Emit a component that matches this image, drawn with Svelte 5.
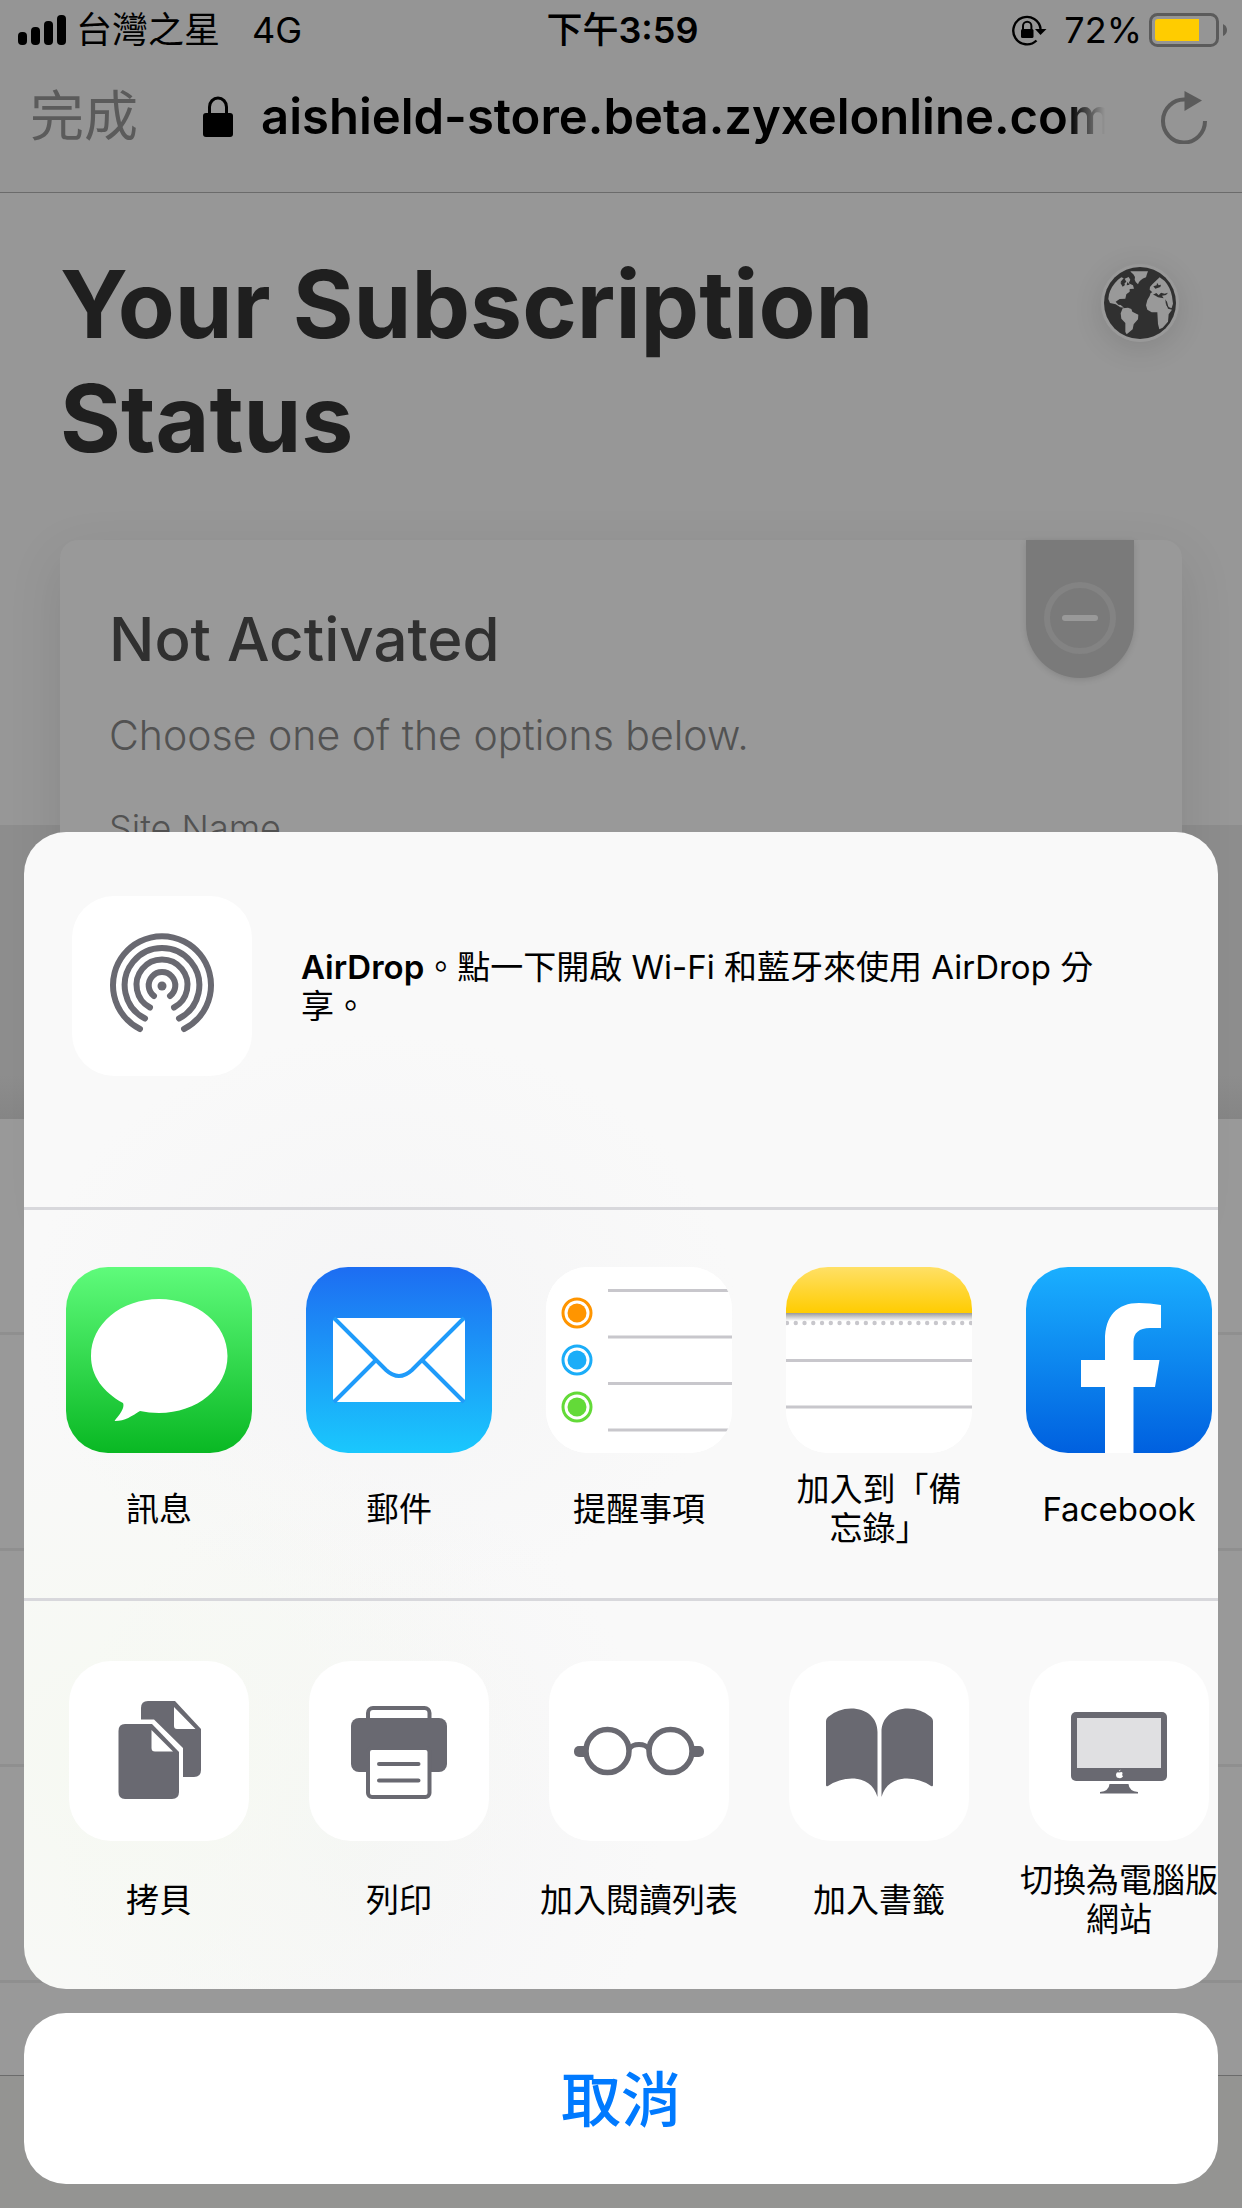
<script>
  const bars = [13, 18, 24, 30];
  const apps = [
    { id: 'messages', label: '訊息' },
    { id: 'mail', label: '郵件' },
    { id: 'reminders', label: '提醒事項' },
    { id: 'notes', label: '加入到「備忘錄」' },
    { id: 'facebook', label: 'Facebook' }
  ];
  const actions = [
    { id: 'copy', label: '拷貝' },
    { id: 'print', label: '列印' },
    { id: 'reading', label: '加入閱讀列表' },
    { id: 'bookmark', label: '加入書籤' },
    { id: 'desktop', label: '切換為電腦版網站' }
  ];
  const reminderRows = [
    { y: 46, color: '#ff9500' },
    { y: 93, color: '#1badf8' },
    { y: 140, color: '#63da38' }
  ];
</script>

<div class="screen">
  <header class="chrome">
    <div class="status">
      <div class="carrier">
        <div class="signal">
          {#each bars as h}<i style:height="{h}px"></i>{/each}
        </div>
        <span>台灣之星</span>
        <span class="network">4G</span>
      </div>
      <div class="clock">下午<b>3:59</b></div>
      <div class="power">
        <svg width="36" height="32" viewBox="0 0 36 32" aria-hidden="true">
          <path d="M24.500 26.500 A13.700 13.700 0 1 1 28.600 15" fill="none" stroke="#000" stroke-width="2.4" />
          <path d="M23 15 H34.500 L28.500 21 Z" fill="#000" />
          <rect x="9" y="15" width="12.500" height="9" rx="1.500" />
          <path d="M11 16 V12 a4.200 4.200 0 0 1 8.400 0 V16" fill="none" stroke="#000" stroke-width="2" />
        </svg>
        <span>72%</span>
        <svg class="battery" width="78" height="34" viewBox="0 0 78 34" aria-hidden="true">
          <rect x="1.500" y="1.500" width="67" height="31" rx="7" fill="none" stroke="#5b5b5b" stroke-width="3" />
          <path d="M50 6 H9 a3 3 0 0 0 -3 3 V25 a3 3 0 0 0 3 3 H50 Z" fill="#ffcc00" />
          <path d="M74 11 q4 2 4 6 t-4 6 Z" fill="#5b5b5b" />
        </svg>
      </div>
    </div>
    <div class="toolbar">
      <button class="done">完成</button>
      <div class="address">
        <svg width="30" height="42" viewBox="0 0 30 42" aria-hidden="true">
          <rect x="0" y="17" width="30" height="24" rx="3" />
          <path d="M6.500 18 V11 a8.500 9 0 0 1 17 0 V18" fill="none" stroke="#000" stroke-width="3" />
        </svg>
        <span>aishield-store.beta.zyxelonline.com</span>
      </div>
      <button class="reload" aria-label="重新載入">
        <svg width="48" height="54" viewBox="0 0 48 54" aria-hidden="true">
          <path d="M24 9.500 A21 21.500 0 1 0 44 31" fill="none" stroke="#5b5b5b" stroke-width="4" />
          <path d="M23.500 1 L41 10.500 L23.500 21 Z" fill="#5b5b5b" />
        </svg>
      </button>
    </div>
  </header>

  <main>
    <div class="title">
      <h1>Your Subscription Status</h1>
      <button class="language" aria-label="Language">
        <svg width="78" height="78" viewBox="33 29 234 234" aria-hidden="true">
          <circle cx="150" cy="146" r="117" fill="#999" />
          <circle cx="150" cy="146" r="108" fill="#303030" />
          <g fill="#999">
            <path d="M121 51 L174 51 Q170 61 168 69 Q158 72 152 78 Q146 83 144 90 Q136 84 134 76 Q137 67 130 60 Q124 56 121 51Z" />
            <path d="M57 120 Q63 96 84 76 L94 69 L101 72 L92 82 L101 90 L109 82 L104 73 L116 68 L121 76 L116 87 L129 93 L132 103 L119 104 L119 112 L109 120 L106 133 L89 134 L77 142 L85 151 L92 152 L102 160 L91 159 L77 150 L60 146 L55 134Z" />
            <path d="M98 162 L114 160 L124 164 L127 172 L145 181 L144 195 L131 210 L128 225 L110 240 L106 233 L106 206 L94 193 L92 177Z" />
            <path d="M179 125 L182 116 L187 114 L179 106 L180 98 L187 90 L209 69 L224 80 Q241 99 246 126 L249 148 L244 164 L235 157 L231 142 L225 135 L234 163 L246 166 L236 180 L234 202 L218 220 L208 225 L204 209 L202 174 L185 174 L172 166 L168 153 L172 137Z" />
          </g>
          <path d="M190 96 L200 93 L201 85 L206 93 L213 91 L211 98 L196 103Z M189 121 L199 116 L206 123 L213 115 L224 118 L234 115 L228 122 L216 124 L221 132 L204 129 L194 123Z M112 83 l7 8 -9 2Z M91 85 l9 -4 5 11 -7 5Z" fill="#303030" />
          <path d="M228 142 Q229 162 246 163" fill="none" stroke="#303030" stroke-width="3" />
        </svg>
      </button>
    </div>
    <section class="card">
      <div class="ribbon">
        <svg width="84" height="72" viewBox="0 0 84 72" aria-hidden="true">
          <circle cx="42" cy="36" r="33" fill="none" stroke="#838383" stroke-width="6" />
          <path d="M27 36 H57" stroke="#999" stroke-width="6" stroke-linecap="round" />
        </svg>
      </div>
      <h2>Not Activated</h2>
      <p>Choose one of the options below.</p>
      <p class="field">Site Name</p>
    </section>
  </main>
  <div class="band"></div>
  <div class="list"><i></i><i></i><i></i><i></i></div>
  <footer></footer>

  <div class="overlay">
    <div class="sheet">
      <section class="airdrop">
        <button class="tile" aria-label="AirDrop">
          <svg width="180" height="180" viewBox="0 0 180 180" aria-hidden="true">
            <g fill="none" stroke="#696971" stroke-width="6" stroke-linecap="round">
              <path d="M68 133 A49 49 0 1 1 112 133" />
              <path d="M73 122.500 A37.300 37.300 0 1 1 107 122.500" />
              <path d="M78 111.500 A25.500 25.500 0 1 1 102 111.500" />
              <path d="M82 100 A13.300 13.300 0 1 1 98 100" />
            </g>
            <circle cx="90" cy="90" r="4.500" fill="#696971" />
          </svg>
        </button>
        <p><b>AirDrop</b>。點一下開啟 Wi-Fi 和藍牙來使用 AirDrop 分享。</p>
      </section>

      <section class="row">
        {#each apps as app}
          <button class="item">
            <span class="app">
              <svg width="186" height="186" viewBox="0 0 186 186" aria-hidden="true">
                {#if app.id === 'messages'}
                  <defs><linearGradient id="gm" x2="0" y2="1"><stop stop-color="#5ffb7b" /><stop offset="1" stop-color="#09b823" /></linearGradient></defs>
                  <rect width="186" height="186" fill="url(#gm)" />
                  <path d="M93 32 C131 32 161.500 57 161.500 89 C161.500 121 131 146 93 146 C86 146 80 145 74 144 C66 149 59 154 49 154 C47 154 60 143 57 136 C37 125 25 109 25 89 C25 57 55 32 93 32Z" fill="#fff" />
                {:else if app.id === 'mail'}
                  <defs><linearGradient id="ga" x2="0" y2="1"><stop stop-color="#1d6df2" /><stop offset="1" stop-color="#1ac8fd" /></linearGradient></defs>
                  <rect width="186" height="186" fill="url(#ga)" />
                  <rect x="27" y="51" width="132" height="84" rx="4" fill="#fff" />
                  <path d="M28 51 L80 103 Q93 115 106 103 L158 51 M28 135 L70 93 M158 135 L116 93" fill="none" stroke="#1f9bfa" stroke-width="4" />
                {:else if app.id === 'reminders'}
                  <rect width="186" height="186" fill="#fff" />
                  <path d="M62 23.500 H186 M62 70 H186 M62 116.500 H186 M62 163 H186" stroke="#c8c7cc" stroke-width="3" />
                  {#each reminderRows as r}
                    <circle cx="31" cy={r.y} r="14" fill="none" stroke={r.color} stroke-width="3" />
                    <circle cx="31" cy={r.y} r="9.500" fill={r.color} />
                  {/each}
                {:else if app.id === 'notes'}
                  <defs>
                    <linearGradient id="gn" x2="0" y2="1"><stop stop-color="#ffe066" /><stop offset="1" stop-color="#ffcc00" /></linearGradient>
                    <linearGradient id="gs" x2="0" y2="1"><stop stop-color="#9a9a9a" /><stop offset="1" stop-color="#fff" /></linearGradient>
                  </defs>
                  <rect width="186" height="186" fill="#fff" />
                  <rect width="186" height="46" fill="url(#gn)" />
                  <rect y="46" width="186" height="8" fill="url(#gs)" />
                  <path d="M1 56 H186" stroke="#c8c7cc" stroke-width="4.400" stroke-linecap="round" stroke-dasharray="0 8.760" />
                  <path d="M0 93.500 H186 M0 140 H186" stroke="#c8c7cc" stroke-width="3" />
                {:else}
                  <defs><linearGradient id="gf" x2="0" y2="1"><stop stop-color="#1aafff" /><stop offset="1" stop-color="#0060df" /></linearGradient></defs>
                  <rect width="186" height="186" fill="url(#gf)" />
                  <path d="M79 186 V120 H55 V93 H79 V73 C79 49 91 36 113 36 Q124 36 135 38 V61 H124 C113 61 107.500 66 107.500 75 V93 H133.500 L129 120 H107.500 V186Z" fill="#fff" />
                {/if}
              </svg>
            </span>
            <span class="label short">{app.label}</span>
          </button>
        {/each}
      </section>

      <section class="row actions">
        {#each actions as action}
          <button class="item">
            <span class="tile">
              <svg width="180" height="180" viewBox="0 0 180 180" fill="#696971" aria-hidden="true">
                {#if action.id === 'copy'}
                  <path d="M72 58.500 V47 Q72 40 79 40 H106 L132 68 V109 Q132 116 125 116 H114 V87 L85 58.500Z" />
                  <path d="M56 63 H83 L110 91 V131 Q110 138 103 138 H56 Q49.500 138 49.500 131 V70 Q49.500 63 56 63Z" />
                  <path d="M105 46 L126.500 68 H108 Q105 68 105 65Z M82.500 69 L104 90.500 H86 Q82.500 90.500 82.500 87Z" fill="#fff" />
                {:else if action.id === 'print'}
                  <rect x="59" y="47" width="61.500" height="40" rx="5" fill="#fff" stroke="#696971" stroke-width="4" />
                  <rect x="42" y="57" width="96" height="54" rx="8" />
                  <rect x="59" y="87" width="61.500" height="49" rx="4" fill="#fff" stroke="#696971" stroke-width="4" />
                  <path d="M70 103 H109.500 M70 119.500 H109.500" stroke="#696971" stroke-width="4" stroke-linecap="round" />
                {:else if action.id === 'reading'}
                  <g fill="none" stroke="#696971">
                    <circle cx="58.500" cy="90" r="21.500" stroke-width="5.500" />
                    <circle cx="121.500" cy="90" r="21.500" stroke-width="5.500" />
                    <path d="M80 88 Q83 83.500 90 83.500 Q97 83.500 100 88" stroke-width="5" />
                  </g>
                  <rect x="25" y="85" width="11" height="11" rx="5" />
                  <rect x="30" y="85" width="6" height="11" />
                  <rect x="144" y="85" width="11" height="11" rx="5" />
                  <rect x="144" y="85" width="6" height="11" />
                {:else if action.id === 'bookmark'}
                  <path d="M37 60 Q37 58 39 56 Q49 47.500 62 47.500 C78 47.500 88.500 57 88.500 71 V136 C85 124 76 117.500 63 117.500 Q50 117.500 39 125 Q37 126 37 124Z" />
                  <path d="M144 60 Q144 58 142 56 Q132 47.500 119 47.500 C103 47.500 92.500 57 92.500 71 V136 C96 124 105 117.500 118 117.500 Q131 117.500 142 125 Q144 126 144 124Z" />
                {:else}
                  <rect x="42" y="51" width="96" height="69" rx="5" />
                  <rect x="48" y="57" width="84" height="50" fill="#e0e0e2" />
                  <path d="M80.500 123 H99.500 Q100 130 109 131 V132.500 H71 V131 Q80 130 80.500 123Z" />
                  <path d="M90 111.500 q4 -1.500 3.500 1 q-1 1.500 .500 3 q-2 2.500 -4 1.500 q-3 0 -3 -3.500 q.500 -3 3 -2Z M90 110.500 q0 -1.500 1.500 -2 q0 1.500 -1.500 2Z" fill="#fff" />
                {/if}
              </svg>
            </span>
            <span class="label">{action.label}</span>
          </button>
        {/each}
      </section>
    </div>
    <button class="cancel">取消</button>
  </div>
</div>

<style>
  :global(body) {
    margin: 0;
  }
  .screen {
    position: relative;
    min-height: 100vh;
    overflow: hidden;
    display: flex;
    flex-direction: column;
    background: #979797;
    color: #000;
    font-family: Inter, 'Noto Sans CJK TC', sans-serif;
  }
  button {
    margin: 0;
    padding: 0;
    border: 0;
    background: none;
    color: inherit;
    font: inherit;
  }
  svg {
    display: block;
    flex: none;
  }
  h1,
  h2,
  p {
    margin: 0;
    font-weight: 400;
  }
  b {
    font-weight: 600;
  }

  .chrome {
    background: #959595;
    border-bottom: 1px solid #6b6b6b;
  }
  .status {
    display: grid;
    grid-template-columns: 1fr auto 1fr;
    align-items: center;
    height: 60px;
    padding: 0 15px 0 18px;
    font-size: 36px;
    line-height: 60px;
  }
  .carrier,
  .power {
    display: flex;
    align-items: center;
  }
  .power {
    justify-content: flex-end;
    gap: 16px;
  }
  .battery {
    margin-left: -9px;
  }
  .signal {
    display: flex;
    align-items: flex-end;
    gap: 4px;
    margin-right: 10px;
  }
  .signal i {
    width: 9px;
    border-radius: 4px;
    background: #000;
  }
  .network {
    margin-left: 32px;
  }
  .clock {
    font-weight: 500;
  }
  .toolbar {
    display: flex;
    align-items: center;
    height: 132px;
    padding: 0 33px 18px 30px;
    box-sizing: border-box;
  }
  .done {
    color: #5b5b5b;
    font-size: 54px;
    font-weight: 400;
    line-height: 80px;
  }
  .address {
    flex: 1;
    min-width: 0;
    display: flex;
    align-items: center;
    gap: 28px;
    margin: 0 56px 0 65px;
    overflow: hidden;
    white-space: nowrap;
    font-size: 49px;
    font-weight: 600;
    line-height: 80px;
    mask-image: linear-gradient(to left, transparent, #000 36px);
  }

  main {
    padding: 54px 60px 0;
    height: 578px;
  }
  .title {
    display: flex;
    justify-content: space-between;
    align-items: flex-start;
  }
  h1 {
    max-width: 900px;
    color: #1f1f1f;
    font-size: 93px;
    font-weight: 700;
    line-height: 114px;
  }
  .language {
    margin: 17px 3px 0 0;
    border-radius: 50%;
    box-shadow: 0 6px 30px rgba(0, 0, 0, 0.12);
  }
  .card {
    position: relative;
    height: 600px;
    margin-top: 65px;
    padding: 69px 49px 0;
    border-radius: 18px;
    background: #999;
    box-shadow: 0 18px 54px rgba(0, 0, 0, 0.1);
  }
  .ribbon {
    position: absolute;
    top: 0;
    right: 48px;
    display: flex;
    align-items: flex-end;
    justify-content: center;
    width: 108px;
    height: 138px;
    padding-bottom: 24px;
    box-sizing: border-box;
    border-radius: 0 0 54px 54px;
    background: #7a7a7a;
    box-shadow: 0 2px 6px rgba(0, 0, 0, 0.12);
  }
  h2 {
    color: #303030;
    font-size: 60px;
    font-weight: 500;
    line-height: 60px;
  }
  .card p {
    margin-top: 36px;
    color: #525252;
    font-size: 41px;
    font-weight: 300;
    line-height: 60px;
  }
  .card .field {
    margin-top: 33px;
    font-size: 36px;
  }
  .band {
    height: 294px;
    background: linear-gradient(#8d8d8d 85%, #858585);
  }
  .list {
    flex: 1;
    background: #999;
  }
  .list i {
    display: block;
    height: 213px;
    border-bottom: 3px solid #8f8f8f;
  }
  footer {
    height: 132px;
    border-top: 1px solid #6b6b6b;
    background: #949492;
  }

  .overlay {
    position: absolute;
    inset: auto 24px 24px;
    display: flex;
    flex-direction: column;
    gap: 24px;
  }
  .sheet {
    overflow: hidden;
    border-radius: 42px;
    background:
      radial-gradient(ellipse at 8% 80%, #f6f9f2, transparent 28%),
      radial-gradient(ellipse at 30% 42%, #f5f5f6, transparent 30%),
      radial-gradient(ellipse at 28% 86%, #f5f5f6, transparent 25%),
      #f9f9f9;
  }
  .airdrop {
    display: flex;
    align-items: flex-start;
    gap: 49px;
    height: 375px;
    padding: 64px 100px 0 48px;
    box-sizing: border-box;
    font-size: 33px;
    line-height: 39px;
  }
  .airdrop p {
    padding-top: 52px;
  }
  .tile,
  .app {
    display: block;
    flex: none;
    overflow: hidden;
    border-radius: 42px;
    background: #fff;
  }
  .row {
    display: flex;
    height: 391px;
    padding: 57px 0 0 15px;
    box-sizing: border-box;
    border-top: 3px solid #d8d8dc;
    overflow: hidden;
  }
  .row.actions {
    padding-top: 60px;
  }
  .item {
    flex: none;
    display: flex;
    flex-direction: column;
    align-items: center;
    width: 240px;
  }
  .label {
    display: flex;
    align-items: center;
    justify-content: center;
    width: 210px;
    height: 78px;
    margin-top: 20px;
    font-size: 33px;
    line-height: 39px;
  }
  .short {
    width: 186px;
    margin-top: 17px;
  }
  .cancel {
    height: 171px;
    padding-bottom: 6px;
    border-radius: 42px;
    background: #fff;
    color: #007aff;
    font-size: 60px;
    font-weight: 500;
  }
</style>
